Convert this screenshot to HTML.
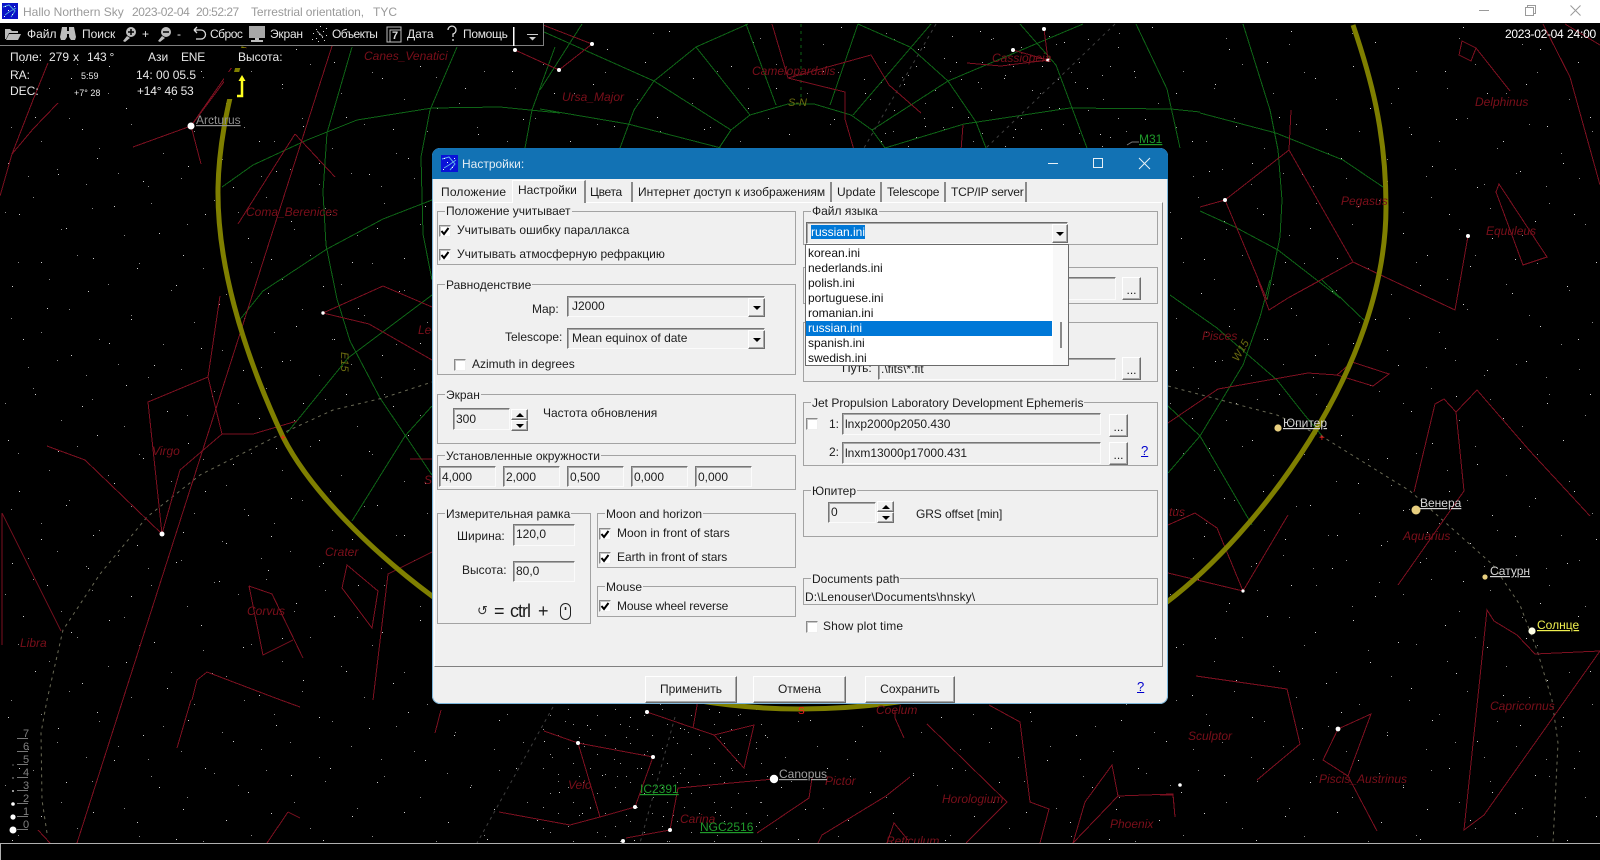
<!DOCTYPE html>
<html><head><meta charset="utf-8"><title>Hallo Northern Sky</title>
<style>
html,body{margin:0;padding:0;background:#000;width:1600px;height:860px;overflow:hidden}
body{position:relative;font:12px "Liberation Sans","DejaVu Sans",sans-serif;color:#1c1c1c}
svg{position:absolute;left:0;top:0;display:block}
.ul text{text-decoration:underline}
.a,.t,.g,.e,.b,.c,.d{position:absolute;box-sizing:border-box}
.t{white-space:nowrap;line-height:14px}
.g{border:1px solid #a3a3a3}
.l{position:absolute;left:7px;top:-7px;background:#f0f0f0;padding:0 1px;line-height:14px;white-space:nowrap}
.e{background:#f0f0f0;border:1px solid;border-color:#777 #fbfbfb #fbfbfb #777;box-shadow:inset 1px 1px 0 #a8a8a8;padding:0 0 0 2px;line-height:20px;white-space:nowrap;overflow:hidden}
.b{background:#f0f0f0;border:1px solid;border-color:#fff #6e6e6e #6e6e6e #fff;box-shadow:inset -1px -1px 0 #a8a8a8;text-align:center;white-space:nowrap}
.c{width:12px;height:12px;background:#fff;border:1px solid;border-color:#8a8a8a #eee #eee #8a8a8a;box-shadow:inset 1px 1px 0 #c8c8c8}
.c svg{left:0;top:0}
.d{background:#f0f0f0;border:1px solid;border-color:#fff #6e6e6e #6e6e6e #fff;box-shadow:inset -1px -1px 0 #a8a8a8}
.d:after{content:"";position:absolute;left:50%;top:50%;margin:-2px 0 0 -4px;border:4px solid transparent;border-top:4px solid #000;border-bottom:0}
.d.u:after{border-top:0;border-bottom:4px solid #000}
.tb{position:absolute;top:27px;line-height:14px;color:#e6e6e6;white-space:nowrap}
.info{position:absolute;line-height:14px;color:#e8e8e8;white-space:nowrap}
.tab{position:absolute;top:182px;height:20px;border-right:2px solid #8a8a8a}
.li{position:absolute;left:2px;line-height:15px;height:15px;color:#111;white-space:nowrap}
a.q{position:absolute;color:#0000cc;text-decoration:underline;line-height:14px;font-size:13px}
</style></head><body>

<svg width="1600" height="860" viewBox="0 0 1600 860" xmlns="http://www.w3.org/2000/svg">
<defs>
<pattern id="p1" width="311" height="277" patternUnits="userSpaceOnUse"><path fill="#cfcfcf" d="M12 9h1v1h-1zM47 31h1v1h-1zM88 14h1v1h-1zM131 42h1v1h-1zM176 8h1v1h-1zM219 27h1v1h-1zM268 16h1v1h-1zM296 49h1v1h-1zM23 62h1v1h-1zM71 78h1v1h-1zM109 66h1v1h-1zM154 88h1v1h-1zM201 71h1v1h-1zM243 93h1v1h-1zM282 84h1v1h-1zM35 117h1v1h-1zM82 129h1v1h-1zM126 108h1v1h-1zM167 134h1v1h-1zM212 119h1v1h-1zM259 141h1v1h-1zM303 126h1v1h-1zM8 163h1v1h-1zM58 174h1v1h-1zM97 158h1v1h-1zM143 181h1v1h-1zM188 166h1v1h-1zM233 187h1v1h-1zM276 171h1v1h-1zM19 214h1v1h-1zM66 228h1v1h-1zM114 206h1v1h-1zM159 233h1v1h-1zM205 214h1v1h-1zM248 238h1v1h-1zM291 221h1v1h-1zM41 262h1v1h-1zM93 258h1v1h-1zM137 268h1v1h-1zM183 255h1v1h-1zM226 266h1v1h-1zM271 259h1v1h-1z"/></pattern>
<pattern id="p2" width="233" height="191" patternUnits="userSpaceOnUse"><path fill="#8a8a8a" d="M5 21h1v1h-1zM33 6h1v1h-1zM61 38h1v1h-1zM92 17h1v1h-1zM124 44h1v1h-1zM151 12h1v1h-1zM187 33h1v1h-1zM214 9h1v1h-1zM18 71h1v1h-1zM49 88h1v1h-1zM77 64h1v1h-1zM108 93h1v1h-1zM139 72h1v1h-1zM171 99h1v1h-1zM203 77h1v1h-1zM226 103h1v1h-1zM11 127h1v1h-1zM41 141h1v1h-1zM69 118h1v1h-1zM99 148h1v1h-1zM131 124h1v1h-1zM163 153h1v1h-1zM194 131h1v1h-1zM222 159h1v1h-1zM28 176h1v1h-1zM57 169h1v1h-1zM86 184h1v1h-1zM118 173h1v1h-1zM148 186h1v1h-1zM181 178h1v1h-1z"/></pattern>
<pattern id="p3" width="47" height="39" patternUnits="userSpaceOnUse"><path fill="#999" d="M4 7h1v1h-1zM19 2h1v1h-1zM33 13h1v1h-1zM9 22h1v1h-1zM26 27h1v1h-1zM41 33h1v1h-1zM15 35h1v1h-1z"/></pattern>
<pattern id="p4" width="97" height="71" patternUnits="userSpaceOnUse"><path fill="#aaa" d="M8 11h1v1h-1zM35 4h1v1h-1zM62 19h1v1h-1zM88 8h1v1h-1zM21 39h1v1h-1zM51 47h1v1h-1zM79 36h1v1h-1zM12 62h1v1h-1zM43 66h1v1h-1zM71 58h1v1h-1z"/></pattern>
</defs>
<rect width="1600" height="860" fill="#000"/>
<rect width="1600" height="843" fill="url(#p1)"/>
<rect width="1600" height="843" fill="url(#p2)"/>
<rect x="540" y="705" width="230" height="138" fill="url(#p3)"/>
<rect x="860" y="30" width="260" height="118" fill="url(#p4)"/>

<!-- green grid -->
<g fill="none" stroke="#0e6416" stroke-width="1" shape-rendering="crispEdges">
<path d="M352 47L327 133 323 192 326 245 337 299 350 341 380 398 432 475"/>
<path d="M457 47L430 110 421 157 423 234 432 280"/>
<path d="M555 47L532 110 525 148"/>
<path d="M222 187L253 165 307 140 357 120 432 108 500 107 560 113"/>
<path d="M238 322L263 291 327 249 383 219 432 200"/>
<path d="M287 433L348 358 432 295"/>
<path d="M352 521L405 436 432 406"/>
<path d="M719 148L731 130 750 115 788 104 814 104 851 115 872 130 885 148"/>
<path d="M620 148L634 110 654 81 696 47 748 24"/>
<path d="M858 24L910 47 948 81 976 122 986 148"/>
<path d="M544 32L654 81 731 130"/>
<path d="M540 109L628 124 721 148"/>
<path d="M582 24L540 90"/>
<path d="M746 24L776 105M696 47L750 115M858 24L830 105M931 24L853 115M1083 24L948 81 872 130"/>
<path d="M885 148L964 124 1070 108 1171 109 1200 112"/>
<path d="M1020 24L1056 65 1087 148M1136 24L1167 89 1180 148"/>
<path d="M1243 24L1270 110 1278 150 1282 200 1280 237 1267 300"/>
<path d="M1200 113L1276 133 1343 160 1383 187"/>
<path d="M1200 211L1235 227 1278 250 1340 298"/>
<path d="M1170 295L1217 328 1277 380 1303 413 1323 437"/>
<path d="M1270 280L1260 317 1243 365 1200 436 1168 473"/>
<path d="M1168 406L1200 436 1252 525"/>
<path d="M1322 280L1367 323"/>
</g>
<!-- dashed -->
<g fill="none" stroke="#6a6a55" stroke-width="1" stroke-dasharray="3 4">
<path d="M47 833L42 800 41 733 47 700 63 630 100 574 147 517 200 475 283 433 333 410 383 398 432 382"/>
<path d="M1168 386L1277 415 1323 437 1410 491 1493 565 1520 605 1537 650 1552 700 1558 743 1553 843"/>
<path d="M553 707L477 843M675 717L640 843M936 24L864 148M1115 24L986 148" stroke="#3f3f3f"/>
<path d="M801 24V99" stroke="#0e6416"/>
</g>
<!-- red constellation lines -->
<g fill="none" stroke="#7d1020" stroke-width="1" shape-rendering="crispEdges">
<path d="M48 63L33 100 12 154 0 196M58 103L33 129 12 154"/>
<path d="M133 147L191 126 201 164M191 126L229 75M191 126L246 47"/>
<path d="M332 46L77 843"/>
<path d="M295 134L238 224M295 134L335 177"/>
<path d="M220 296L208 377 222 434 253 434 297 421M208 377L148 402 162 534 180 470 222 434"/>
<path d="M47 446L85 460 162 534"/>
<path d="M2 513L61 631M2 513V645"/>
<path d="M249 586L272 594 303 658M249 586L263 655 293 640"/>
<path d="M347 565L378 591 372 628 342 588Z"/>
<path d="M373 700L388 574 432 552"/>
<path d="M192 700L197 680 207 672 278 699 300 707M191 700L177 748M288 812L267 843M288 812L300 818M38 830L50 843"/>
<path d="M323 313L383 286 432 307M323 313L369 324 432 360M410 459H432"/>
<path d="M543 25L592 44 559 70 515 50"/>
<path d="M772 24L788 78 845 92 845 119 854 150M788 78L871 55 889 85 921 113"/>
<path d="M1044 29L1048 60 1013 50M1048 60L1001 66 967 63M963 125L961 150"/>
<path d="M1291 110L1289 150 1225 200 1200 207M1225 200L1267 300M1289 150L1353 262 1288 298 1269 310 1258 280M1288 298L1321 280"/>
<path d="M1353 262L1455 310 1468 236"/>
<path d="M1462 41L1476 48 1471 61 1459 55ZM1476 48L1510 91"/>
<path d="M1543 24L1570 77 1600 185M1565 24L1600 45"/>
<path d="M1499 184L1547 257 1523 265 1496 192Z"/>
<path d="M1168 423L1218 389 1308 373 1337 375 1373 386 1389 374 1352 362 1337 375"/>
<path d="M1414 492L1435 404 1444 399 1456 412 1464 491 1398 585M1456 412L1477 390 1529 450 1590 516"/>
<path d="M1168 525L1195 513 1217 528 1243 591 1288 515M1243 591L1168 573"/>
<path d="M1196 676L1287 689 1300 744 1257 780"/>
<path d="M1338 729L1371 714 1348 776 1323 760ZM1348 776L1377 831"/>
<path d="M1487 610L1464 830 1484 815 1600 651 1535 654 1517 635 1494 621Z"/>
<path d="M1160 795H1173L1175 817 1173 794 1118 796 1112 765 1085 802 1073 843 1118 796"/>
<path d="M647 712L714 735 754 725 744 768 714 735M698 700L693 728"/>
<path d="M544 731L578 743 653 757 635 807 600 817 570 825 499 812M578 743L600 817"/>
<path d="M774 779L678 788 670 830 626 838"/>
<path d="M812 778L809 798 757 833"/>
<path d="M910 777L886 796 822 835 818 843"/>
<path d="M887 843L894 823 908 840"/>
<path d="M927 724L1007 802 966 843M895 710V718L904 738"/>
<path d="M989 705L1020 722 1030 802 1049 809 1040 843"/>
<path d="M441 710L435 733"/>
</g>
<!-- horizon -->
<path fill="none" stroke="#7f7f00" stroke-width="5" d="M244 47C232 85 219 135 218 188C217 260 240 345 283 437C310 490 370 550 432 596C520 660 660 709 800 709C930 709 1070 670 1167 602C1255 535 1386 370 1386 207C1386 130 1370 75 1353 25"/>
<rect x="228" y="48" width="18" height="20" fill="#000"/>
<rect x="224" y="72" width="20" height="27" fill="#000"/>
<!-- stars -->
<g fill="#fff">
<circle cx="191" cy="126" r="3.5"/><circle cx="162" cy="534" r="2.5"/><circle cx="774" cy="779" r="4.2"/>
<circle cx="323" cy="313" r="1.7"/><circle cx="592" cy="44" r="2"/><circle cx="559" cy="70" r="2"/>
<circle cx="515" cy="50" r="2"/><circle cx="1044" cy="29" r="2"/><circle cx="1013" cy="50" r="2"/><circle cx="1048" cy="60" r="2"/>
<circle cx="1225" cy="200" r="2"/><circle cx="1468" cy="236" r="2"/><circle cx="1243" cy="591" r="1.6"/><circle cx="1338" cy="729" r="2.4"/><circle cx="1180" cy="785" r="1.8"/>
<circle cx="647" cy="712" r="2"/><circle cx="578" cy="743" r="2"/><circle cx="653" cy="757" r="2"/><circle cx="635" cy="807" r="2"/><circle cx="670" cy="830" r="2"/><circle cx="623" cy="841" r="2"/>
<circle cx="1532" cy="631" r="3.6" fill="#ffffe6"/>
</g>
<g fill="#e8cf7f"><circle cx="1278" cy="428" r="3.6"/><circle cx="1416" cy="510" r="4.5"/><circle cx="1485" cy="577" r="2.6"/></g>
<g fill="#ff1c1c" font-family="Liberation Sans" font-size="10"><text x="280" y="441">+</text><text x="1319" y="441">+</text><text x="798" y="714">S</text></g>
<!-- constellation names -->
<g font-family="Liberation Sans,sans-serif" font-style="italic" font-size="12" fill="#7a0f1a">
<text x="364" y="60">Canes_Venatici</text><text x="562" y="101">Ursa_Major</text><text x="752" y="75">Camelopardalis</text>
<text x="992" y="62">Cassiopeia</text><text x="1475" y="106">Delphinus</text><text x="1341" y="205">Pegasus</text><text x="1486" y="235">Equuleus</text>
<text x="1202" y="340">Pisces</text><text x="1403" y="540">Aquarius</text><text x="1490" y="710">Capricornus</text><text x="1188" y="740">Sculptor</text>
<text x="1319" y="783">Piscis_Austrinus</text><text x="1110" y="828">Phoenix</text><text x="942" y="803">Horologium</text><text x="825" y="785">Pictor</text>
<text x="680" y="823">Carina</text><text x="568" y="789">Velo</text><text x="886" y="845">Reticulum</text><text x="876" y="714">Coelum</text>
<text x="20" y="647">Libra</text><text x="247" y="615">Corvus</text><text x="325" y="556">Crater</text><text x="152" y="455">Virgo</text>
<text x="246" y="216">Coma_Berenices</text><text x="418" y="334">Leo</text><text x="424" y="484">Se</text><text x="1169" y="516">tus</text>
</g>
<g font-family="Liberation Sans,sans-serif" font-style="italic" font-size="11" fill="#6b6b10">
<text x="788" y="106">S-N</text>
<text x="349" y="360" transform="rotate(90 349 352)">E15</text>
<text x="1238" y="362" transform="rotate(-60 1238 362)">W15</text>
</g>
<g class="ul" font-family="Liberation Sans,sans-serif" font-size="12">
<text x="196" y="124" fill="#8f8f8f">Arcturus</text><text x="779" y="778" fill="#a0a0a0">Canopus</text>
<text x="1283" y="427" fill="#d5d5d5">Юпитер</text><text x="1420" y="507" fill="#d5d5d5">Венера</text><text x="1490" y="575" fill="#d5d5d5">Сатурн</text>
<text x="1537" y="629" fill="#f0f050">Солнце</text>
<text x="640" y="793" fill="#1f9a2a">IC2391</text><text x="700" y="831" fill="#1f9a2a">NGC2516</text><text x="1139" y="143" fill="#1f9a2a">M31</text>
</g>
<path d="M1127 145L1132 142H1139" stroke="#777" fill="none"/>
<!-- magnitude legend -->
<g font-family="Liberation Sans,sans-serif" font-size="11" fill="#808080">
<text x="23" y="828">0</text><text x="23" y="815">1</text><text x="23" y="802">2</text><text x="23" y="789">3</text><text x="23" y="776">4</text><text x="23" y="763">5</text><text x="23" y="750">6</text><text x="23" y="737">7</text>
</g>
<path stroke="#777" fill="none" d="M17 829.500H28M17 816.500H28M17 803.500H28M17 790.500H28M17 777.500H28M17 764.500H28M17 751.500H28M17 738.500H28"/>
<g fill="#fff"><circle cx="13" cy="830" r="3.5"/><circle cx="13" cy="817" r="2.6"/><circle cx="13" cy="804" r="1.8"/><circle cx="13" cy="791" r=".9"/><circle cx="13" cy="778" r=".6"/><circle cx="13" cy="765" r=".5"/></g>
<!-- status bar -->
<rect x="0" y="843" width="1600" height="17" fill="#000"/>
<rect x="0" y="843" width="1600" height="1" fill="#b0b0b0"/>
<rect x="0" y="843" width="1" height="17" fill="#b0b0b0"/>
<!-- yellow arrow -->
<path d="M237 96H242V79" fill="none" stroke="#ffff20" stroke-width="2.5"/><path d="M242 75l-3.500 6h7z" fill="#ffff20"/>
</svg>

<!-- app title bar -->
<div class="a" style="left:0;top:0;width:1600px;height:23px;background:#fff"></div>
<svg style="left:2px;top:3px" width="16" height="16"><rect width="16" height="16" fill="#0a12c8"/><path d="M1 4L7 2 13 8 9 14M3 12L7 9 14 5" stroke="#4fa0d8" fill="none"/><path fill="#fff" d="M3 3h1v1H3zM12 3h1v1h-1zM6 7h1v1H6zM10 11h1v1h-1zM2 13h1v1H2z"/></svg>
<div class="t" style="left:23px;top:5px;color:#9a9a9a">Hallo Northern Sky</div>
<div class="t" style="left:132px;top:5px;color:#9a9a9a;letter-spacing:-.4px">2023-02-04</div>
<div class="t" style="left:196px;top:5px;color:#9a9a9a;letter-spacing:-.5px">20:52:27</div>
<div class="t" style="left:251px;top:5px;color:#9a9a9a;letter-spacing:-.1px">Terrestrial orientation,</div>
<div class="t" style="left:373px;top:5px;color:#9a9a9a">TYC</div>
<svg style="left:1470px;top:0" width="130" height="23" fill="none" stroke="#9a9a9a"><path d="M9 10.500H19"/><rect x="55.500" y="7.500" width="8" height="8"/><path d="M57.500 7.500V5.500H65.500V13.500H63.500"/><path d="M100.500 5.500L110.500 15.500M110.500 5.500L100.500 15.500"/></svg>

<!-- toolbar -->
<div class="a" style="left:0;top:23px;width:544px;height:23px;background:#000;border-bottom:1px solid #808080;border-right:1px solid #808080;box-sizing:border-box"></div>
<svg style="left:0;top:24px" width="544" height="22">
<g fill="#bdbdbd">
<path d="M5 5h5l2 2h6v2H9l-3 6H5zM9 10h12l-3 6H6z"/>
<path d="M62 3h5v4h2V3h5l2 10-1 3h-4l-2-3v-3h-2v3l-2 3h-4l-1-3z"/>
<circle cx="131" cy="8" r="5"/><path d="M127 12l-4 5 2 1 5-4z"/>
<circle cx="166" cy="8" r="5"/><path d="M162 12l-4 5 2 1 5-4z"/>
<rect x="249" y="2" width="16" height="12" fill="#a8a8a8"/><rect x="255" y="14" width="4" height="2"/><rect x="251" y="16" width="12" height="2"/>
<rect x="387" y="3" width="14" height="15" fill="none" stroke="#bdbdbd"/><rect x="390" y="6" width="11" height="12" fill="none" stroke="#bdbdbd"/>
</g>
<path d="M128 8h6M131 5v6M163 8h6" stroke="#000" fill="none" stroke-width="1.500"/>
<path d="M194 6h7a4.500 4.500 0 0 1 0 9h-5M194 6l3-3M194 6l3 3" fill="none" stroke="#ddd" stroke-width="1.300"/>
<g fill="#ddd"><path d="M313 9h1v1h-1zM316 5h1v1h-1zM320 2h1v1h-1zM323 7h1v1h-1zM326 4h1v1h-1zM319 10h1v1h-1zM322 13h1v1h-1zM316 14h1v1h-1zM312 15h1v1h-1zM326 11h1v1h-1zM324 16h1v1h-1zM318 17h1v1h-1z"/></g>
<path d="M317 7l6 6" stroke="#999"/>
<text x="392" y="15" font-family="Liberation Sans" font-size="11" font-weight="bold" fill="#ddd">7</text>
<path d="M448 6a4 4 0 1 1 5 4v3M453 15v2" fill="none" stroke="#ddd" stroke-width="1.300"/>
<rect x="513" y="3" width="1.500" height="19" fill="#fff"/>
<path d="M527 10.500h11" stroke="#ccc"/><path d="M529 13h7l-3.500 3.500z" fill="#ccc"/>
</svg>
<div class="tb" style="left:27px">Файл</div>
<div class="tb" style="left:82px">Поиск</div>
<div class="tb" style="left:142px">+</div>
<div class="tb" style="left:177px">-</div>
<div class="tb" style="left:210px;letter-spacing:-.5px">Сброс</div>
<div class="tb" style="left:270px;letter-spacing:-.2px">Экран</div>
<div class="tb" style="left:332px;letter-spacing:-.6px">Объекты</div>
<div class="tb" style="left:407px">Дата</div>
<div class="tb" style="left:463px;letter-spacing:-.3px">Помощь</div>
<div class="tb" style="left:1505px;color:#fff;letter-spacing:-.3px">2023-02-04</div>
<div class="tb" style="left:1567px;color:#fff;letter-spacing:-.2px">24:00</div>

<!-- info -->
<div class="info" style="left:10px;top:50px">Поле:</div>
<div class="info" style="left:49px;top:50px">279</div>
<div class="info" style="left:73px;top:50px">x</div>
<div class="info" style="left:87px;top:50px;letter-spacing:-.2px">143 °</div>
<div class="info" style="left:148px;top:50px">Ази</div>
<div class="info" style="left:181px;top:50px;letter-spacing:-.2px">ENE</div>
<div class="info" style="left:238px;top:50px">Высота:</div>
<div class="info" style="left:10px;top:68px">RA:</div>
<div class="info" style="left:81px;top:69px;font-size:9px">5:59</div>
<div class="info" style="left:136px;top:68px">14: 00 05.5</div>
<div class="info" style="left:10px;top:84px">DEC:</div>
<div class="info" style="left:74px;top:86px;font-size:9px">+7° 28</div>
<div class="info" style="left:137px;top:84px;letter-spacing:-.2px">+14° 46 53</div>

<!-- dialog -->
<div class="a" style="left:432px;top:148px;width:736px;height:556px;border-radius:8px;background:#f0f0f0;overflow:hidden;box-shadow:inset 0 0 0 1px #7db7dc">
  <div class="a" style="left:0;top:0;width:736px;height:31px;background:#1272b4"></div>
</div>
<svg style="left:441px;top:155px" width="17" height="17"><rect width="17" height="17" fill="#0a12d8"/><path d="M1 4L8 2 14 9 9 15M3 13L8 10 15 5" stroke="#5fb0e8" fill="none"/><path fill="#fff" d="M3 3h1v1H3zM13 3h1v1h-1zM6 7h1v1H6zM11 12h1v1h-1zM2 14h1v1H2z"/></svg>
<div class="t" style="left:462px;top:157px;color:#e4edf4">Настройки:</div>
<svg style="left:1040px;top:150px" width="120" height="26" fill="none" stroke="#e8f0f6" stroke-width="1"><path d="M8 13.500H18"/><rect x="53.500" y="8.500" width="9" height="9"/><path d="M99 8L110 19M110 8L99 19"/></svg>

<!-- panel edges -->
<div class="a" style="left:434px;top:202px;width:729px;height:465px;border:1px solid;border-color:#fff #8a8a8a #808080 #fff"></div>

<!-- tabs -->
<div class="t" style="left:441px;top:185px;letter-spacing:.2px">Положение</div>
<div class="a" style="left:512px;top:180px;width:74px;height:23px;background:#f0f0f0;border-top:1px solid #fff;border-left:1px solid #fff;border-right:2px solid #8a8a8a;box-sizing:border-box"></div>
<div class="t" style="left:518px;top:183px">Настройки</div>
<div class="tab" style="left:586px;width:45px"></div><div class="t" style="left:590px;top:185px;letter-spacing:-.3px">Цвета</div>
<div class="tab" style="left:631px;width:199px"></div><div class="t" style="left:638px;top:185px">Интернет доступ к изображениям</div>
<div class="tab" style="left:830px;width:50px"></div><div class="t" style="left:837px;top:185px">Update</div>
<div class="tab" style="left:880px;width:64px"></div><div class="t" style="left:887px;top:185px;letter-spacing:-.2px">Telescope</div>
<div class="tab" style="left:944px;width:81px"></div><div class="t" style="left:951px;top:185px;letter-spacing:-.2px">TCP/IP server</div>

<!-- left column -->
<div class="g" style="left:437px;top:211px;width:359px;height:54px"><span class="l" style="top:-8px">Положение учитывает</span></div>
<div class="c" style="left:439px;top:225px"><svg width="10" height="10"><path d="M1.500 5L4 8 8.500 2" fill="none" stroke="#000" stroke-width="2"/></svg></div>
<div class="t" style="left:457px;top:223px">Учитывать ошибку параллакса</div>
<div class="c" style="left:439px;top:249px"><svg width="10" height="10"><path d="M1.500 5L4 8 8.500 2" fill="none" stroke="#000" stroke-width="2"/></svg></div>
<div class="t" style="left:457px;top:247px">Учитывать атмосферную рефракцию</div>

<div class="g" style="left:437px;top:284px;width:359px;height:91px"><span class="l">Равноденствие</span></div>
<div class="t" style="left:532px;top:302px">Map:</div>
<div class="e" style="left:567px;top:296px;width:198px;height:21px;padding-left:4px;line-height:19px">J2000</div>
<div class="d" style="left:748px;top:298px;width:17px;height:19px"></div>
<div class="t" style="left:505px;top:330px">Telescope:</div>
<div class="e" style="left:567px;top:328px;width:198px;height:21px;padding-left:4px;line-height:19px">Mean equinox of date</div>
<div class="d" style="left:748px;top:330px;width:17px;height:19px"></div>
<div class="c" style="left:454px;top:359px"></div>
<div class="t" style="left:472px;top:357px">Azimuth in degrees</div>

<div class="g" style="left:437px;top:394px;width:359px;height:50px"><span class="l">Экран</span></div>
<div class="e" style="left:453px;top:408px;width:57px;height:22px">300</div>
<div class="d u" style="left:511px;top:409px;width:17px;height:11px"></div>
<div class="d" style="left:511px;top:420px;width:17px;height:11px"></div>
<div class="t" style="left:543px;top:406px">Частота обновления</div>

<div class="g" style="left:437px;top:455px;width:359px;height:35px"><span class="l">Установленные окружности</span></div>
<div class="e" style="left:439px;top:466px;width:57px;height:21px;line-height:21px">4,000</div>
<div class="e" style="left:503px;top:466px;width:57px;height:21px;line-height:21px">2,000</div>
<div class="e" style="left:567px;top:466px;width:57px;height:21px;line-height:21px">0,500</div>
<div class="e" style="left:631px;top:466px;width:57px;height:21px;line-height:21px">0,000</div>
<div class="e" style="left:695px;top:466px;width:57px;height:21px;line-height:21px">0,000</div>

<div class="g" style="left:437px;top:513px;width:154px;height:111px"><span class="l">Измерительная рамка</span></div>
<div class="t" style="left:457px;top:529px">Ширина:</div>
<div class="e" style="left:513px;top:524px;width:62px;height:22px;line-height:19px">120,0</div>
<div class="t" style="left:462px;top:563px">Высота:</div>
<div class="e" style="left:513px;top:561px;width:62px;height:21px;line-height:19px">80,0</div>
<div class="t" style="left:477px;top:604px;font-size:13px;color:#333">↺</div>
<div class="t" style="left:494px;top:604px;font-size:18px">=</div>
<div class="t" style="left:510px;top:604px;font-size:18px;letter-spacing:-1px;font-weight:normal">ctrl</div>
<div class="t" style="left:538px;top:604px;font-size:18px">+</div>
<svg style="left:559px;top:602px" width="13" height="19" fill="none" stroke="#222"><rect x="1.500" y="1.500" width="10" height="16" rx="5"/><path d="M6.500 5v3" stroke-width="1.500"/></svg>

<div class="g" style="left:597px;top:513px;width:199px;height:55px"><span class="l">Moon and horizon</span></div>
<div class="c" style="left:599px;top:528px"><svg width="10" height="10"><path d="M1.500 5L4 8 8.500 2" fill="none" stroke="#000" stroke-width="2"/></svg></div>
<div class="t" style="left:617px;top:526px">Moon in front of stars</div>
<div class="c" style="left:599px;top:552px"><svg width="10" height="10"><path d="M1.500 5L4 8 8.500 2" fill="none" stroke="#000" stroke-width="2"/></svg></div>
<div class="t" style="left:617px;top:550px;letter-spacing:-.05px">Earth in front of stars</div>

<div class="g" style="left:597px;top:586px;width:199px;height:31px"><span class="l">Mouse</span></div>
<div class="c" style="left:599px;top:600px"><svg width="10" height="10"><path d="M1.500 5L4 8 8.500 2" fill="none" stroke="#000" stroke-width="2"/></svg></div>
<div class="t" style="left:617px;top:599px;letter-spacing:-.15px">Mouse wheel reverse</div>

<!-- right column -->
<div class="g" style="left:803px;top:211px;width:355px;height:34px"><span class="l" style="top:-8px">Файл языка</span></div>

<div class="g" style="left:803px;top:267px;width:355px;height:37px"></div>
<div class="e" style="left:1000px;top:277px;width:116px;height:23px"></div>
<div class="b" style="left:1122px;top:277px;width:19px;height:23px;line-height:24px">...</div>
<div class="g" style="left:803px;top:322px;width:355px;height:60px"></div>
<div class="t" style="left:842px;top:361px">Путь:</div>
<div class="e" style="left:878px;top:358px;width:238px;height:22px">.\fits\*.fit</div>
<div class="b" style="left:1122px;top:357px;width:19px;height:23px;line-height:24px">...</div>

<div class="e" style="left:806px;top:222px;width:262px;height:22px;border-color:#6a6a6a #fbfbfb #fbfbfb #6a6a6a"></div>
<div class="a" style="left:811px;top:225px;width:54px;height:14px;background:#0078d7"></div>
<div class="t" style="left:811px;top:225px;color:#fff">russian.ini</div>
<div class="d" style="left:1052px;top:224px;width:16px;height:19px"></div>

<div class="a" style="left:805px;top:244px;width:264px;height:122px;background:#fff;border:1px solid #6a6a6a;box-sizing:border-box">
  <div class="li" style="top:1px">korean.ini</div>
  <div class="li" style="top:16px">nederlands.ini</div>
  <div class="li" style="top:31px">polish.ini</div>
  <div class="li" style="top:46px">portuguese.ini</div>
  <div class="li" style="top:61px">romanian.ini</div>
  <div class="a" style="left:0;top:76px;width:246px;height:15px;background:#0078d7"></div>
  <div class="li" style="top:76px;color:#fff">russian.ini</div>
  <div class="li" style="top:91px">spanish.ini</div>
  <div class="li" style="top:106px">swedish.ini</div>
  <div class="a" style="left:247px;top:0;width:15px;height:120px;background:#f8f8f8"></div>
  <div class="a" style="left:254px;top:77px;width:2px;height:26px;background:#8a8a8a"></div>
</div>

<div class="g" style="left:803px;top:402px;width:355px;height:64px"><span class="l">Jet Propulsion Laboratory Development Ephemeris</span></div>
<div class="c" style="left:806px;top:418px"></div>
<div class="t" style="left:829px;top:417px">1:</div>
<div class="e" style="left:842px;top:413px;width:259px;height:22px">lnxp2000p2050.430</div>
<div class="b" style="left:1109px;top:414px;width:19px;height:23px;line-height:24px">...</div>
<div class="t" style="left:829px;top:445px">2:</div>
<div class="e" style="left:842px;top:442px;width:259px;height:22px;line-height:20px">lnxm13000p17000.431</div>
<div class="b" style="left:1109px;top:442px;width:19px;height:23px;line-height:24px">...</div>
<a class="q" style="left:1141px;top:444px">?</a>

<div class="g" style="left:803px;top:490px;width:355px;height:47px"><span class="l">Юпитер</span></div>
<div class="e" style="left:828px;top:502px;width:48px;height:21px;line-height:18px">0</div>
<div class="d u" style="left:877px;top:501px;width:17px;height:11px"></div>
<div class="d" style="left:877px;top:512px;width:17px;height:11px"></div>
<div class="t" style="left:916px;top:507px;letter-spacing:-.1px">GRS offset [min]</div>

<div class="g" style="left:803px;top:578px;width:355px;height:27px"><span class="l">Documents path</span></div>
<div class="t" style="left:805px;top:590px;letter-spacing:.1px">D:\Lenouser\Documents\hnsky\</div>
<div class="c" style="left:806px;top:621px"></div>
<div class="t" style="left:823px;top:619px;letter-spacing:.1px">Show plot time</div>

<!-- buttons -->
<div class="b" style="left:645px;top:676px;width:92px;height:27px;line-height:24px">Применить</div>
<div class="b" style="left:753px;top:676px;width:93px;height:27px;line-height:24px">Отмена</div>
<div class="b" style="left:865px;top:676px;width:90px;height:27px;line-height:24px">Сохранить</div>
<a class="q" style="left:1137px;top:680px">?</a>
</body></html>
